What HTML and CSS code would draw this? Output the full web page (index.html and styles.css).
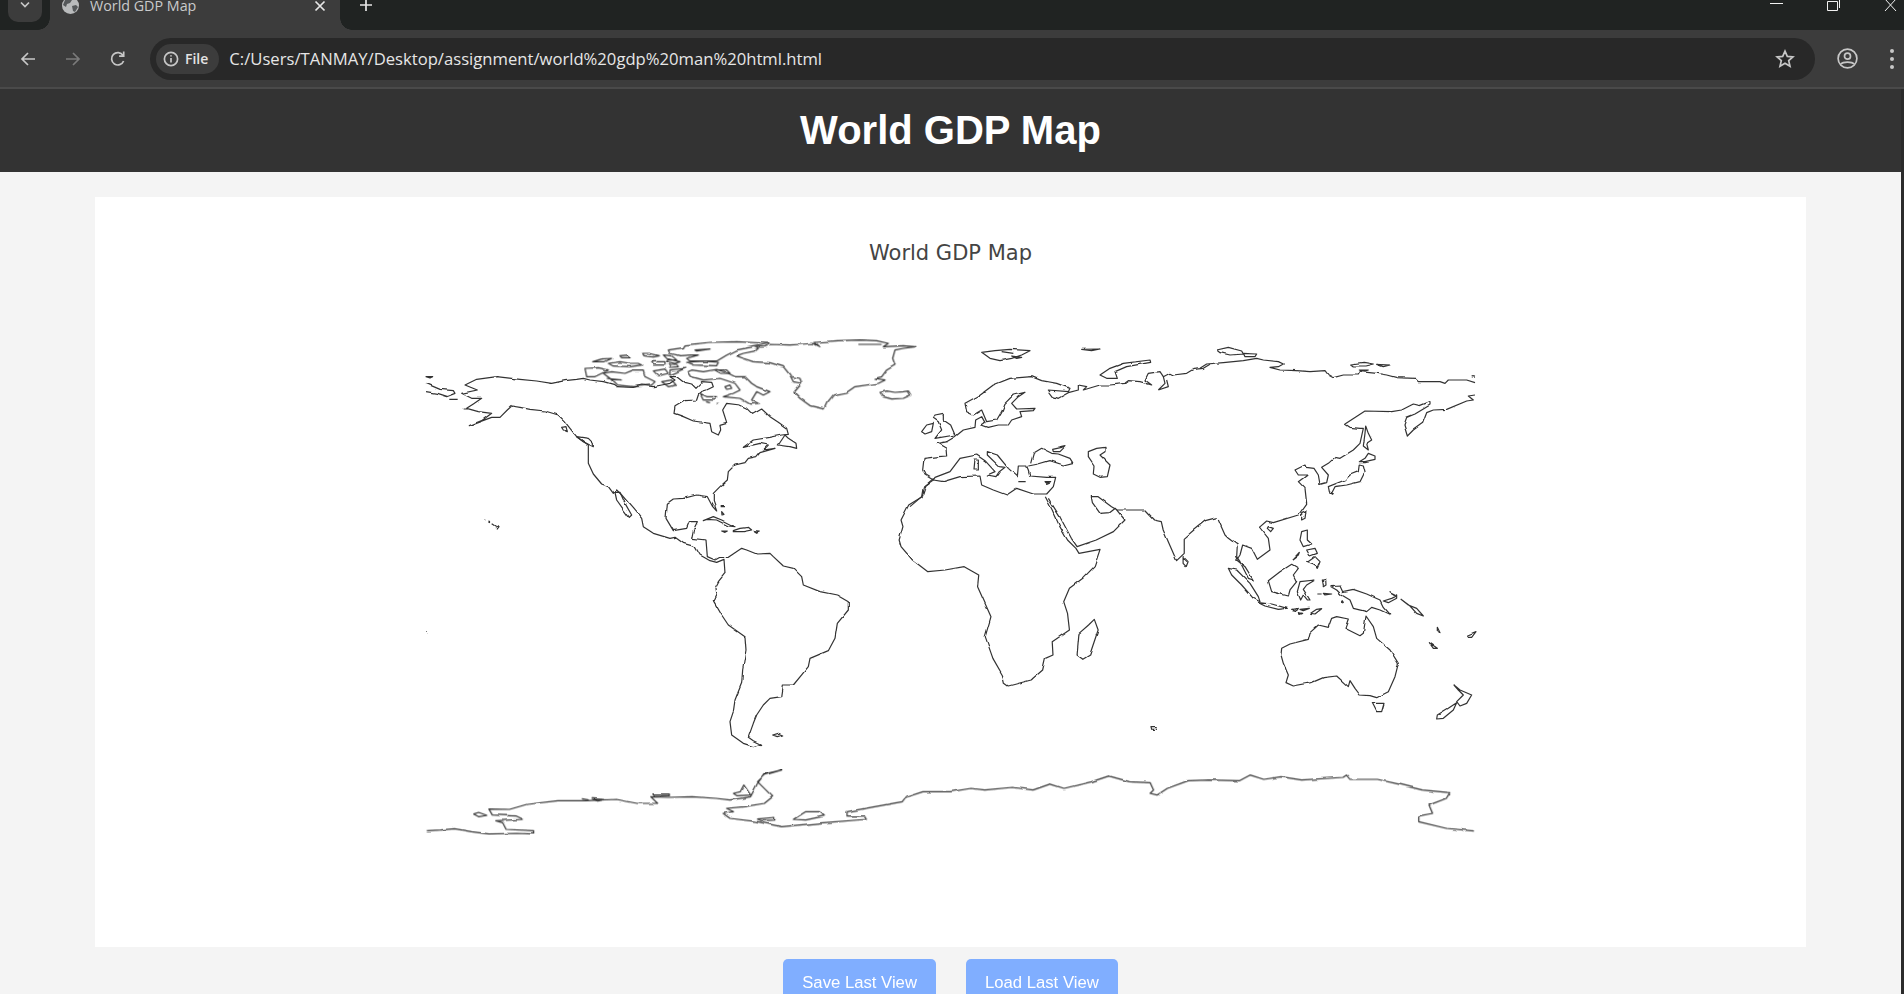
FILE: index.html
```html
<!DOCTYPE html>
<html lang="en">
<head>
<meta charset="UTF-8" />
<meta name="viewport" content="width=device-width, initial-scale=1" />
<title>World GDP Map</title>
<link rel="stylesheet" href="styles.css">
</head>
<body>
  <div class="tabstrip">
    <div class="tab-search">
      <svg width="12" height="8" viewBox="0 0 12 8"><path d="M2 1.5l4 4 4-4" class="ico-light" /></svg>
    </div>
    <div class="tab">
      <svg class="favicon" width="17" height="17" viewBox="0 0 17 17">
        <circle cx="8.5" cy="8.5" r="8.5" fill="#b9bbbc" />
        <path d="M3 3l4-2 3 2-2 3-3 1-1 3-3-2zM10 9l4-1 2 2-3 5-2-1z" fill="#55585a" />
      </svg>
      <span class="tab-title">World GDP Map</span>
      <svg class="tab-close" width="12" height="12" viewBox="0 0 12 12"><path d="M1.5 1.5l9 9M10.5 1.5l-9 9" class="ico-white" /></svg>
    </div>
    <svg class="new-tab" width="14" height="14" viewBox="0 0 14 14"><path d="M7 1v12M1 7h12" class="ico-white" /></svg>
    <div class="window-controls">
      <svg width="14" height="8" viewBox="0 0 14 8"><path d="M0 3.5h13" class="ico-thin" /></svg>
      <svg width="14" height="12" viewBox="0 0 14 12"><path d="M.5 1.5h10v9H.5zM12.5 0v8" class="ico-thin" /></svg>
      <svg width="14" height="12" viewBox="0 0 14 12"><path d="M1 -1l11 12M12 -1l-11 12" class="ico-thin" /></svg>
    </div>
  </div>

  <div class="toolbar">
    <div class="nav-btn"><svg width="18" height="18" viewBox="0 0 18 18"><path d="M16 9H3M9 3L3 9l6 6" class="ico-light" /></svg></div>
    <div class="nav-btn"><svg width="18" height="18" viewBox="0 0 18 18"><path d="M2 9h13M9 3l6 6-6 6" class="ico-dim" /></svg></div>
    <div class="nav-btn"><svg width="18" height="18" viewBox="0 0 18 18"><path d="M14.6 11a6.2 6.2 0 1 1-.6-5.6M14.7 1.6v4.6h-4.6" class="ico-light" /></svg></div>
    <div class="omnibox">
      <div class="file-chip">
        <svg width="16" height="16" viewBox="0 0 16 16"><circle cx="8" cy="8" r="6.6" class="ico-light" /><path d="M8 7v4.5M8 4.2v1.4" class="ico-light" /></svg>
        <span>File</span>
      </div>
      <span class="url">C:/Users/TANMAY/Desktop/assignment/world%20gdp%20man%20html.html</span>
      <svg class="star" width="20" height="20" viewBox="0 0 20 20"><path d="M10 2.2l2.3 5.2 5.6.5-4.2 3.7 1.3 5.6L10 14.3l-5 2.9 1.3-5.6-4.2-3.7 5.6-.5z" class="ico-light" /></svg>
    </div>
    <div class="toolbar-right">
      <div class="nav-btn"><svg width="21" height="21" viewBox="0 0 21 21"><circle cx="10.5" cy="10.5" r="9.4" class="ico-light" /><circle cx="10.5" cy="8.2" r="3" class="ico-light" /><path d="M4 16c2-2.6 11-2.6 13 0" class="ico-light" /></svg></div>
      <div class="menu-btn"><i></i><i></i><i></i></div>
    </div>
  </div>

  <header class="site-header">
    <h1>World GDP Map</h1>
    <div class="scroll-edge"></div>
  </header>

  <div class="page">
    <main class="content">
      <section class="map-card">
        <div class="map-title">World GDP Map</div>
        <svg class="map" width="1061" height="510" viewBox="420 330 1061 510">
          <defs>
            <!-- roughens the hand traced coast a bit -->
            <filter id="coast" filterUnits="userSpaceOnUse" x="420" y="330" width="1061" height="510">
              <feTurbulence type="fractalNoise" baseFrequency="0.1" numOctaves="1" seed="4" result="noise" />
              <feDisplacementMap in="SourceGraphic" in2="noise" scale="3" xChannelSelector="R" yChannelSelector="G" />
              <feGaussianBlur stdDeviation="0.3" />
            </filter>
          </defs>
          <g class="coastlines">
          <!-- americas -->
          <g transform="translate(420 330) scale(.33333)">
            <path d="M148 287L185 272 215 250 175 245 140 235 160 222 185 205 155 205 125 190 172 180 135 165 170 148 230 140 300 148 350 153 395 160 435 152 470 148 490 145 510 150 550 155 580 163 590 170 640 172 665 165 700 170 725 165 750 160 765 150 750 140 770 140 795 160 815 165 825 175 845 155 875 157 880 170 860 180 845 185 835 195 830 210 795 212 765 230 762 250 790 260 820 273 870 280 875 305 895 315 902 300 900 283 920 277 908 240 920 220 960 225 980 235 998 253 1025 237 1050 260 1075 277 1100 295 1105 313 1085 315 1050 322 1000 330 970 352 1020 340 1045 345 1030 360 1065 355 1020 368 1010 380 985 385 975 398 945 405 925 425 922 450 900 470 880 490 880 515 890 543 878 530 862 500 830 495 790 505 760 507 742 520 738 565 760 602 800 595 808 575 832 575 820 600 815 625 858 630 862 680 885 690 900 682 925 682 945 668 965 655 980 660 1010 672 1050 670 1060 680 1090 708 1120 715 1145 740 1150 765 1200 785 1250 795 1285 815 1285 840 1252 880 1245 925 1225 962 1170 985 1165 1010 1145 1035 1120 1065 1090 1065 1085 1100 1050 1105 1030 1125 1010 1155 1000 1180 985 1222 1000 1232 1022 1243 1000 1250 970 1240 935 1215 930 1175 940 1145 945 1110 965 1060 968 1020 978 960 975 920 925 885 905 855 880 812 888 795 885 775 895 755 915 730 912 688 890 697 870 692 840 675 825 650 790 640 765 622 750 625 700 610 670 590 665 565 640 535 605 495 590 480 580 490 565 470 545 462 520 432 505 400 505 345 470 320 450 295 432 272 415 255 375 243 330 238 300 232 275 228 262 240 240 262 215 262z" />
            <path d="M585 487L600 487 615 520 635 555 628 562 608 535 590 510z" />
            <path d="M470 320L505 325 520 340 520 350 490 335z" />
            <path d="M425 292L438 290 442 305 430 300z" />
            <path d="M1075 345L1095 315 1105 325 1128 340 1130 355 1110 350z" />
            <path d="M850 572L880 560 905 570 945 590 925 588 890 570 860 568z" />
            <path d="M940 602L960 595 985 592 995 600 970 605 940 605z" />
            <path d="M905 603L922 603 915 607zM1003 602L1018 603 1010 607zM902 530L915 530M905 545L912 553 906 555z" />
            <path d="M1058 1215L1075 1210 1088 1215 1072 1220z" />
            <path d="M193 570h3M205 573l5 2M215 578L225 585 237 590 232 597 225 590M18 905h2" />
            <path d="M18 140h20l-8 4zM18 160L60 178 100 182 105 190 80 200 50 190 18 185M88 208h25M128 237h15" />
          </g>
          <!-- arctic canada, greenland, iceland -->
          <g transform="translate(570 335) scale(.33333)">
            <path d="M500 62L520 55 555 48 565 40 555 37 585 35 600 28 660 30 690 28 730 25 750 35 735 22 800 17 870 15 920 17 955 25 940 35 1000 32 1035 35 1000 40 975 45 968 70 975 90 950 105 935 125 915 130 945 135 925 145 855 155 830 172 790 180 770 205 762 222 720 212 690 190 672 172 695 145 670 140 660 120 640 95 600 83 550 80 520 70z" />
            <path d="M665 125L690 130 695 145M865 28h70" />
            <path d="M295 45L340 38 345 30 420 22 500 20 600 25 550 35 500 45 470 60 440 78 360 78 350 70 385 60 365 60 330 62 300 55z" />
            <path d="M375 45L420 42 380 48z" />
            <path d="M350 82L400 78 445 82 440 92 370 90z" />
            <path d="M355 110L365 105 400 110 440 103 475 115 495 125 525 125 545 145 560 155 600 170 580 180 560 170 545 195 565 205 540 207 510 190 460 185 490 175 510 165 495 145 450 130 400 135 365 125z" />
            <path d="M390 175L410 185 440 185 430 195 400 195zM408 200l12 3M440 205h6M465 155L480 150 485 160 470 163z" />
            <path d="M100 115L125 110 165 115 190 105 220 105 225 125 255 140 245 150 190 155 140 150 120 130zM110 130l45 5" />
            <path d="M45 100L85 98 115 105 75 125 50 125z" />
            <path d="M68 80L95 72 125 70 105 80z" />
            <path d="M115 85L150 80 180 85 205 85 215 90 180 95 130 93z" />
            <path d="M150 62L175 60 180 68 155 68zM218 55L240 55 268 62 250 66 222 62zM245 80L285 80 285 90 250 90zM280 60L305 62 320 75 295 75zM295 72L330 80 315 85 290 80zM295 88L320 88 325 95 300 97zM250 108L285 102 295 115 265 122zM300 105L345 100 300 120zM275 140L305 135 318 150 295 155zM432 105L470 105 480 115 450 115z" />
            <path d="M930 172L950 168 975 172 1000 170 1015 168 1022 180 1000 190 965 192 940 185z" />
          </g>
          <!-- europe, north russia -->
          <g transform="translate(910 340) scale(.33333)">
            <path d="M0 500L35 470 40 440 70 420 45 405 38 390 42 355 85 350 110 348 108 325 82 310 110 305 135 290 160 270 195 262 197 240 215 230 225 248 215 255 235 262 265 255 295 255 305 240 335 230 330 215 370 212 375 205 320 207 305 190 325 170 345 157 310 165 285 190 275 215 260 240 230 245 215 210 190 225 170 215 165 190 210 165 250 135 300 115 365 110 395 122 440 130 480 145 475 155 415 150 430 170 445 175 475 158 505 150 505 135 530 140 520 150 570 135 600 135 645 130 655 122 690 125 725 135 705 120 715 100 750 95 760 110 780 100 790 105 830 100 850 88 880 85 900 73" />
            <path d="M70 420L100 425 150 410 210 408 215 435 250 450 290 465 320 445 370 462 410 462 430 440 437 412 410 412 360 408 355 390 350 378 325 378 322 410 295 385 262 345 232 335 232 345 268 380 285 382 268 395 258 410 232 405 255 395 225 362 200 345 150 355 120 395 75 412z" />
            <path d="M355 378L385 372 420 362 460 375 488 368 480 355 445 342 425 340 395 325 370 340 362 370" />
            <path d="M428 328L465 320 450 335 430 335z" />
            <path d="M195 360L205 360 205 390 192 390z" />
            <path d="M75 225L100 220 100 240 122 255 135 285 75 295 95 270 85 245 70 235z" />
            <path d="M35 275L50 255 70 250 65 275 45 282z" />
            <path d="M535 335L560 325 585 322 585 335 570 345 600 375 592 410 570 412 550 402 552 375 535 350z" />
            <path d="M325 425h25M405 425L422 425 410 430z" />
            <path d="M215 37L255 32 300 28 360 32 335 45 305 55 270 62 240 55zM275 35l35 5M305 48L335 52 320 55z" />
            <path d="M515 28L570 27 545 32z" />
            <path d="M570 105L600 85 640 70 720 60 722 67 650 80 615 95 622 115 590 115z" />
            <path d="M745 150L765 130 760 110M745 150L775 140 770 120" />
          </g>
          <!-- africa, arabia, india -->
          <g transform="translate(880 330) scale(.3827 .33333)">
            <path d="M432 500L450 540 470 590 490 630 512 655 520 670 575 658 560 710 530 745 495 775 480 815 490 850 495 900 450 935 452 975 432 985 425 1020 395 1050 335 1068 325 1060 320 1035 295 985 275 920 290 860 255 770 258 735 220 710 170 720 125 725 85 690 55 650 50 630 60 590 55 570 75 525 110 500 120 465 140 445" />
            <path d="M880 563L850 572 820 600 795 625 795 670 775 692 755 640 740 600 735 575 715 570 690 540 620 540 605 530 570 500 552 500 555 518 575 550 600 548 615 535 640 570 610 605 565 630 515 650 500 625 470 560 445 515 440 505" />
            <path d="M792 680L805 695 800 710 792 700z" />
            <path d="M560 868L570 900 548 975 530 988 515 975 520 910 545 885z" />
            <path d="M708 1190L722 1190 720 1198 710 1198z" />
          </g>
          <!-- east asia -->
          <g transform="translate(1200 340) scale(.33333)">
            <path d="M0 85L20 72 70 68 130 62 170 55 190 60 235 65 250 72 235 80 210 82 240 90 290 92 330 95 375 92 385 105 400 113 430 105 475 105 480 95 530 100 560 105 590 113 645 115 655 125 720 125 735 130 745 120 800 120 825 128" />
            <path d="M825 165L805 168 820 180 800 183 740 208 700 210 680 218 668 250 640 270 622 288 612 255 620 232 645 222 690 195 690 185 660 197 640 192 605 210 575 215 495 213 435 252 450 262 480 265 490 265 480 310 460 330 420 355 405 352 385 370 365 382 385 405 380 428 360 433 355 405 342 385 318 382 315 375 285 390 295 405 322 405 295 425 315 445 320 490 295 525 220 548 200 543 178 562" />
            <path d="M497 258L505 280 515 300 500 310 505 330 490 318 495 280z" />
            <path d="M385 440L435 420 450 405 475 395 478 372 490 375 495 395 480 425 440 435 405 440 395 460 388 455z" />
            <path d="M478 365L495 355 505 340 525 348 525 358 495 365z" />
            <path d="M305 518L318 512 315 535 305 540z" />
            <path d="M452 72L490 67 520 72 495 78 460 78zM530 73L570 75 550 80zM478 90L505 90 490 95z" />
            <path d="M50 30L85 22 125 33 130 42 90 45 60 38zM130 40L170 42 165 50 135 50z" />
            <path d="M815 110l10 2" />
          </g>
          <!-- southeast asia, oceania -->
          <g transform="translate(1200 520) scale(.33333)">
            <path d="M178 21L205 55 210 90 172 118 155 85 128 75 120 105 110 120 135 140 160 180 145 175 120 125 110 110 112 75 85 55 75 45 55 0" />
            <path d="M205 20L220 25 212 35 202 25z" />
            <path d="M305 35L322 30 322 60 335 72 310 80 300 60zM320 90L345 85 352 100 330 108zM320 128L345 110 360 125 352 145 338 135zM278 118L298 97 295 105z" />
            <path d="M205 182L240 155 275 133 295 145 280 165 290 185 270 210 265 228 235 220 215 215z" />
            <path d="M300 185L345 180 320 195 310 208 330 240 322 240 310 225 302 240 292 215z" />
            <path d="M367 180L377 178 378 195 370 200zM352 222h13M370 220L395 222 375 225zM425 243L430 250 425 252z" />
            <path d="M393 200L420 198 428 215 460 208 500 222 540 240 550 260 572 285 540 270 515 262 500 275 460 265 450 240 425 225 410 210z" />
            <path d="M550 243L575 235 590 228 570 215 590 225 590 235 565 248z" />
            <path d="M603 238L625 255 650 265 670 288 650 280 630 258z" />
            <path d="M85 145L110 150 150 190 175 230 180 245 160 235 125 195 95 165z" />
            <path d="M175 248L215 252 262 265 235 268 195 258z" />
            <path d="M275 268L295 265 290 272zM300 268L328 265 310 272zM295 278L308 280 300 283zM332 280L350 268 365 266 345 282z" />
            <path d="M245 385L270 372 325 358 330 338 355 315 385 322 395 295 410 290 445 297 435 325 480 347 490 340 498 288 520 320 530 355 570 390 595 430 585 470 565 515 530 533 510 527 480 525 465 505 450 482 445 500 410 468 370 473 335 488 280 498 258 488 265 465 250 430 243 405z" />
            <path d="M517 550L552 550 545 575 530 575z" />
            <path d="M762 495L780 510 815 525 800 550 780 558 770 545 790 525 775 510z" />
            <path d="M770 548L760 570 730 595 710 597 712 585 745 565z" />
            <path d="M688 368L712 385 700 385zM712 322L720 338 712 335zM803 345L828 335 815 352 805 352z" />
          </g>
          <!-- antarctica -->
          <g transform="translate(420 740) scale(.6888 .33333)">
            <path d="M10 272L30 270 50 266 75 275 100 282 140 280 165 282 165 272 125 268 120 248 110 242 150 238 140 228 105 225 100 207 130 208 155 193 200 182 240 182 285 178 315 190 345 190 335 170 360 172 395 170 430 175 450 180 480 170 490 130 500 102 525 90 500 105 490 125 512 170 500 190 470 200 445 205 455 215 440 220 450 235 490 245 525 260 585 248 648 238 645 228 620 228 620 215 660 200 700 185 705 172 730 155 770 155 800 145 820 150 860 142 890 150 915 132 935 145 975 125 1000 108 1030 125 1060 128 1065 150 1060 160 1070 165 1085 145 1115 122 1145 120 1190 122 1205 105 1225 118 1250 110 1280 120 1340 112 1345 105 1350 118 1390 118 1420 132 1455 150 1495 158 1490 175 1465 195 1470 220 1450 228 1450 245 1490 265 1530 273" />
            <path d="M78 222L85 217 97 226 85 230zM490 237L515 232 515 240 495 242zM542 238L560 215 580 215 587 228 560 240zM455 160L465 155 470 135 480 165 460 167zM338 162L362 162 362 167 340 167zM235 176l10 4M250 176L268 178 258 183z" />
          </g>
          </g>
        </svg>
      </section>
      <div class="btn-row">
        <button class="view-btn">Save Last View</button>
        <button class="view-btn">Load Last View</button>
      </div>
    </main>
    <div class="scroll-edge"></div>
  </div>
</body>
</html>
```

FILE: styles.css
```css
html, body {
  margin: 0;
  padding: 0;
  height: 100%;
  overflow: hidden;
  background: #f4f4f4;
  font-family: "Liberation Sans", Arial, sans-serif;
}

/* browser chrome */
.tabstrip {
  display: flex;
  height: 30px;
  background: #202322;
  overflow: hidden;
}
.tab-search {
  display: flex;
  justify-content: center;
  width: 34px;
  height: 22px;
  margin: 0 8px;
  padding-top: 1px;
  box-sizing: border-box;
  background: #3c3c3c;
  border-radius: 0 0 10px 10px;
}
.tab {
  position: relative;
  display: flex;
  align-items: flex-start;
  width: 290px;
  height: 30px;
  padding-left: 12px;
  box-sizing: border-box;
  background: #3c3c3c;
}
.tab::before, .tab::after {
  content: "";
  position: absolute;
  bottom: 0;
  width: 12px;
  height: 12px;
}
.tab::before {
  left: -12px;
  background: radial-gradient(circle at 0 0, transparent 11.5px, #3c3c3c 12px);
}
.tab::after {
  right: -12px;
  background: radial-gradient(circle at 100% 0, transparent 11.5px, #3c3c3c 12px);
}
.favicon {
  margin-top: -3px;
}
.tab-title {
  margin-left: 11px;
  font: 14.3px/11px "Open Sans", sans-serif;
  color: #c9cacb;
  white-space: nowrap;
}
.tab-close {
  margin-left: auto;
  margin-right: 14px;
}
.new-tab {
  margin: -2px 0 0 19px;
}
.window-controls {
  display: flex;
  gap: 43px;
  margin-left: auto;
  margin-right: 6px;
  align-items: flex-start;
}
.ico-light, .ico-dim, .ico-white, .ico-thin {
  fill: none;
  stroke-width: 1.7;
}
.ico-light { stroke: #c7c7c7; }
.ico-dim { stroke: #7b7b7b; }
.ico-white { stroke: #e6e6e6; }
.ico-thin { stroke: #f2f2f2; stroke-width: 1; }

.toolbar {
  display: flex;
  align-items: center;
  height: 59px;
  padding: 0 0 0 5px;
  box-sizing: border-box;
  background: #3c3c3c;
  border-bottom: 2px solid #4a4a4a;
}
.nav-btn {
  display: flex;
  align-items: center;
  justify-content: center;
  width: 45px;
  flex: none;
}
.omnibox {
  display: flex;
  align-items: center;
  flex: 1;
  height: 42px;
  margin-left: 10px;
  padding: 0 20px 0 6px;
  background: #282828;
  border-radius: 21px;
}
.file-chip {
  display: flex;
  align-items: center;
  gap: 6px;
  height: 30px;
  padding: 0 11px 0 7px;
  background: #3c3c3c;
  border-radius: 15px;
  font: 600 14px "Open Sans", sans-serif;
  color: #e3e3e3;
}
.url {
  margin-left: 10px;
  font: 16.65px "Open Sans", sans-serif;
  color: #e6e6e6;
  white-space: nowrap;
}
.star {
  margin-left: auto;
}
.toolbar-right {
  display: flex;
  align-items: center;
  margin-left: 10px;
}
.menu-btn {
  display: flex;
  flex-direction: column;
  align-items: center;
  gap: 4px;
  width: 34px;
  padding-left: 10px;
  box-sizing: border-box;
}
.menu-btn i {
  width: 4px;
  height: 4px;
  background: #c7c7c7;
  border-radius: 50%;
}

/* page */
.site-header {
  display: flex;
  height: 83px;
  background: #333;
}
.site-header h1 {
  flex: 1;
  margin: 0;
  font-size: 40px;
  line-height: 83px;
  text-align: center;
  color: #fff;
}
.scroll-edge {
  flex: none;
  width: 3px;
  background: #2b2b2b;
}
.page {
  display: flex;
  height: calc(100% - 172px);
}
.content {
  flex: 1;
  min-width: 0;
}
.map-card {
  display: flex;
  flex-direction: column;
  align-items: center;
  width: 90%;
  height: 750px;
  margin: 25px auto 0;
  background: #fff;
}
.map-title {
  padding: 41px 0 62px;
  font: 21px/30px "DejaVu Sans", Verdana, sans-serif;
  color: #444;
}
.map {
  flex: none;
}
.coastlines {
  filter: url(#coast);
}
.map path {
  fill: none;
  stroke: #333;
  stroke-width: 1.2;
  stroke-linejoin: round;
  vector-effect: non-scaling-stroke;
}
.btn-row {
  display: flex;
  justify-content: center;
  gap: 30px;
  margin-top: 12px;
}
.view-btn {
  padding: 14px 19px;
  border: 0;
  border-radius: 5px;
  background: #80aeff;
  color: #fff;
  font: 16.7px "Liberation Sans", Arial, sans-serif;
}
```
